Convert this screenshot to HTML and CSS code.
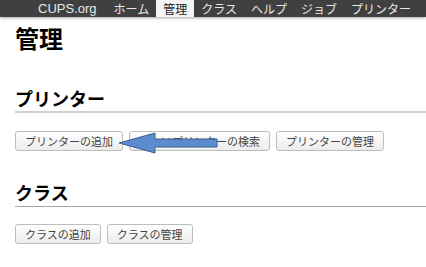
FILE: index.html
```html
<!DOCTYPE html>
<html lang="ja">
<head>
<meta charset="utf-8">
<title>管理 - CUPS</title>
<link rel="stylesheet" href="styles.css">
</head>
<body>
<nav class="nav">
  <a class="nav-item nav-brand">CUPS.org</a>
  <a class="nav-item">ホーム</a>
  <a class="nav-item active">管理</a>
  <a class="nav-item">クラス</a>
  <a class="nav-item">ヘルプ</a>
  <a class="nav-item">ジョブ</a>
  <a class="nav-item">プリンター</a>
</nav>
<main class="content">
  <h1 class="title">管理</h1>
  <section class="section">
    <h2 class="section-title">プリンター</h2>
    <div class="buttons">
      <button class="btn">プリンターの追加</button>
      <button class="btn">新しいプリンターの検索</button>
      <button class="btn">プリンターの管理</button>
    </div>
  </section>
  <section class="section section-second">
    <h2 class="section-title">クラス</h2>
    <div class="buttons">
      <button class="btn">クラスの追加</button>
      <button class="btn">クラスの管理</button>
    </div>
  </section>
</main>
<svg class="arrow" width="426" height="267" viewBox="0 0 426 267">
  <polygon points="119,143 155,133 155,139 217,139 217,147 155,147 155,153" fill="#5b8ccf" stroke="#3e5f8e" stroke-width="1" stroke-linejoin="miter"/>
</svg>
</body>
</html>
```
FILE: styles.css
```css
html, body {
  margin: 0;
  padding: 0;
  background: #fff;
}
body {
  position: relative;
  width: 426px;
  height: 267px;
  overflow: hidden;
  font-family: "Noto Sans CJK JP", "Liberation Sans", sans-serif;
  color: #000;
}
.nav {
  display: flex;
  height: 17px;
  padding-left: 31px;
  background: #404040;
  box-shadow: 0 1px 3px rgba(0, 0, 0, 0.35);
}
.nav-item {
  display: block;
  padding: 0 7px;
  font-size: 12px;
  line-height: 17px;
  color: #e8e8e8;
}
.nav-brand {
  font-family: "Liberation Sans", sans-serif;
  font-size: 13px;
  margin-right: 3px;
}
.nav-item.active {
  background: #f4f4f4;
  color: #222;
}
.content {
  padding: 0 15px 0 15px;
}
.title {
  margin: 9px 0 0 0;
  font-size: 24px;
  line-height: 24px;
  font-weight: bold;
}
.section {
  margin-top: 39px;
}
.section-second {
  margin-top: 32px;
}
.section-title {
  margin: 0 -15px 0 0;
  padding-bottom: 4px;
  font-size: 18px;
  line-height: 18px;
  font-weight: bold;
  border-bottom: 2px solid #cfcfcf;
}
.section-second .section-title {
  padding-bottom: 5px;
  border-bottom: 1px solid #a8a8a8;
}
.buttons {
  display: flex;
  gap: 6px;
  margin-top: 18px;
}
.section-second .buttons {
  margin-top: 17px;
}
.btn {
  height: 20px;
  padding: 0 9px;
  font-family: "Noto Sans CJK JP", sans-serif;
  font-size: 11px;
  line-height: 18px;
  color: #444;
  background: linear-gradient(#ffffff, #ececec);
  border: 1px solid #bdbdbd;
  border-radius: 3px;
}
.arrow {
  position: absolute;
  left: 0;
  top: 0;
  pointer-events: none;
}
```
